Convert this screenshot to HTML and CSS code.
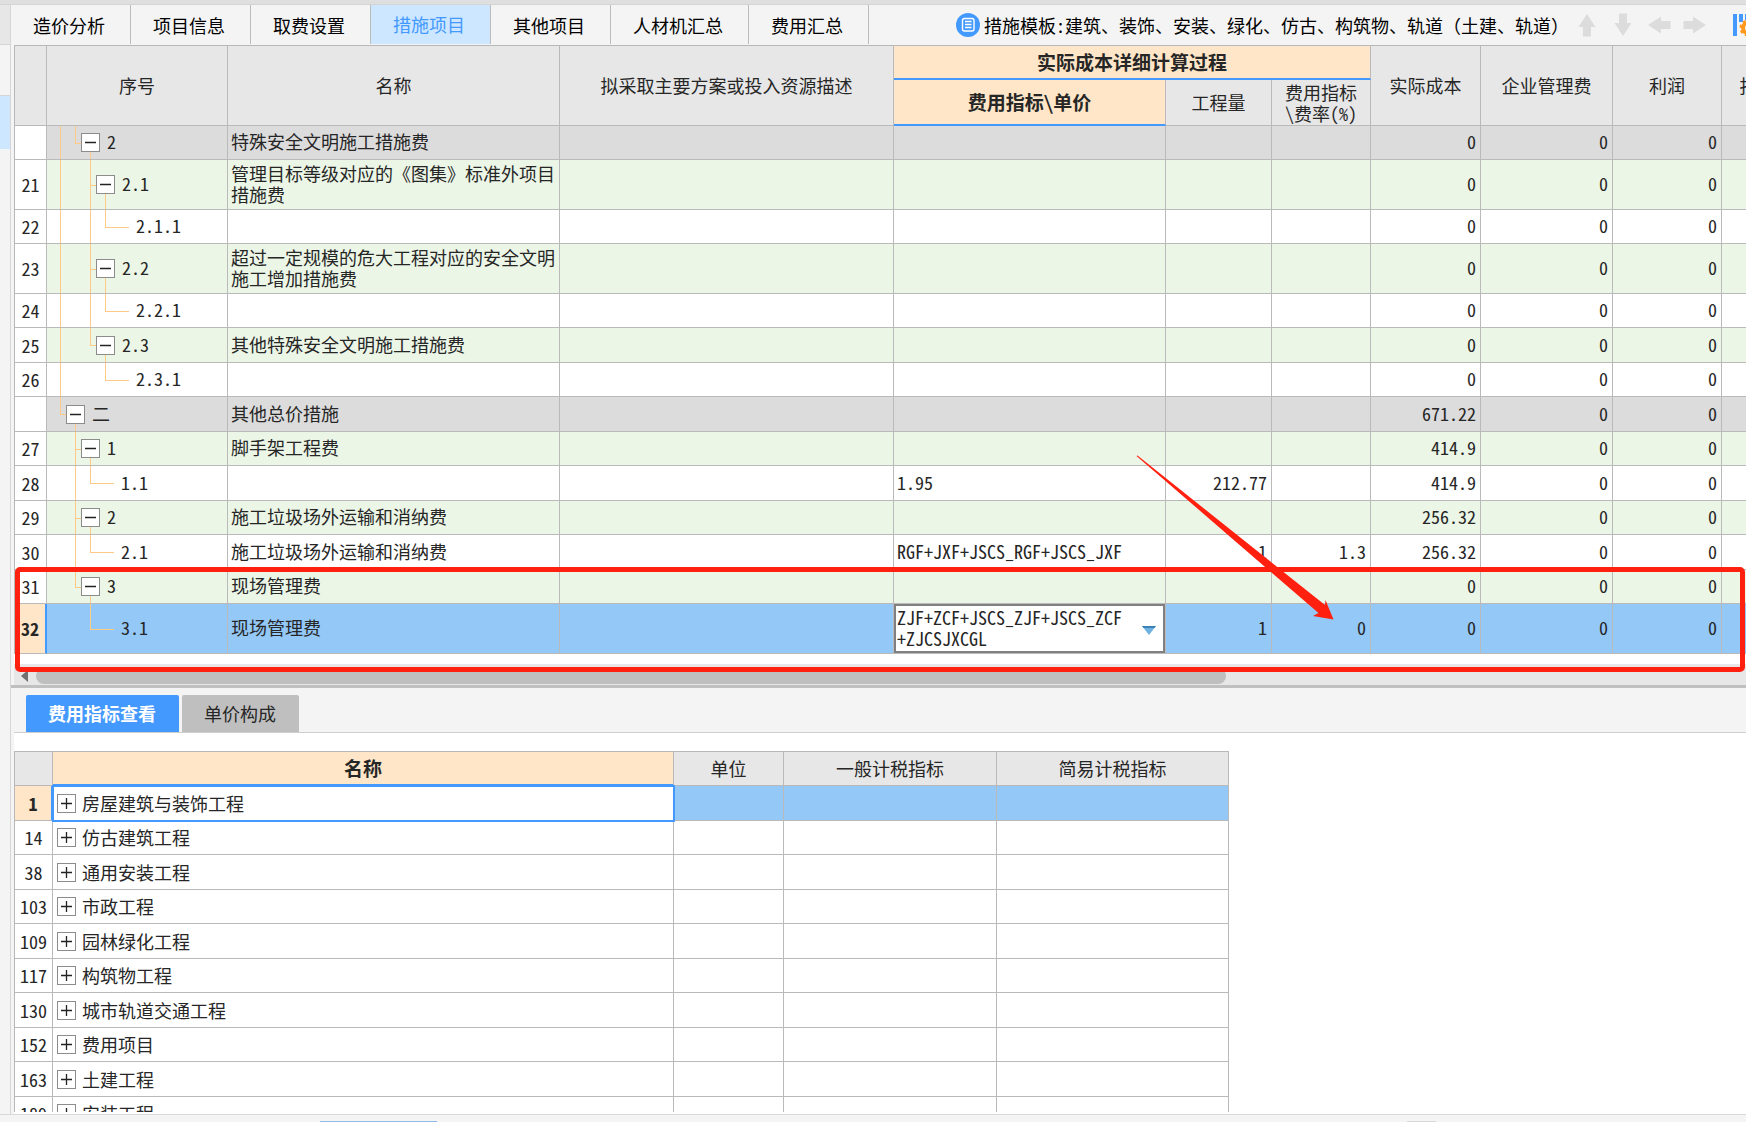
FILE: index.html
```html
<!DOCTYPE html>
<html lang="zh-CN">
<head>
<meta charset="utf-8">
<title>措施项目</title>
<link rel="stylesheet" href="styles.css">
</head>
<body>
<svg class="defs" aria-hidden="true">
  <symbol id="minus" viewBox="0 0 17 17"><path d="M3 8.5h11" stroke="#222" stroke-width="1.5"/></symbol>
  <symbol id="plus" viewBox="0 0 17 17"><path d="M3 8.5h11M8.5 3v11" stroke="#222" stroke-width="1.3"/></symbol>
  <symbol id="arrow" viewBox="0 0 24 24"><path d="M12 1l8.500 13h-4.500v9.500h-8V14H3.500z" fill="#dcdcdc"/></symbol>
</svg>
<div class="app">
  <aside class="rail">
    <div class="rail-head"></div>
    <div class="rail-item"></div>
    <div class="rail-item rail-item-active"></div>
  </aside>
  <main class="main">
    <header class="toolbar">
      <nav class="tabs">
        <button class="tab">造价分析</button>
        <button class="tab">项目信息</button>
        <button class="tab">取费设置</button>
        <button class="tab tab-active">措施项目</button>
        <button class="tab">其他项目</button>
        <button class="tab">人材机汇总</button>
        <button class="tab">费用汇总</button>
      </nav>
      <button class="template">
        <svg width="24" height="24" viewBox="0 0 24 24"><circle cx="12" cy="12" r="12" fill="#4499ff"/><rect x="6.500" y="5.500" width="11.500" height="12.500" rx="2" fill="none" stroke="#fff" stroke-width="1.4"/><path d="M9 8.500h6.500M9 11.500h6.500M9 14.500h6.500" stroke="#fff" stroke-width="1.300"/></svg>
        <span>措施模板:建筑、装饰、安装、绿化、仿古、构筑物、轨道<span class="wide">（土建、轨道）</span></span>
      </button>
      <div class="moves">
        <button class="move" aria-label="上移"><svg width="24" height="24"><use href="#arrow"/></svg></button>
        <button class="move move-down" aria-label="下移"><svg width="24" height="24"><use href="#arrow"/></svg></button>
        <button class="move move-left" aria-label="升级"><svg width="24" height="24"><use href="#arrow"/></svg></button>
        <button class="move move-right" aria-label="降级"><svg width="24" height="24"><use href="#arrow"/></svg></button>
      </div>
      <button class="settings" aria-label="设置"><svg width="24" height="24" viewBox="0 0 24 24"><path d="M0 1h4v22H0zM6 1h4v8H6zM12 1h4v6h-4z" fill="#4499ff"/><circle cx="15" cy="15" r="5" fill="none" stroke="#ff9a1f" stroke-width="4"/><circle cx="15" cy="15" r="7" fill="none" stroke="#ff9a1f" stroke-width="3" stroke-dasharray="3 2.500"/></svg></button>
    </header>

    <section class="upper">
      <table class="grid cost">
        <colgroup><col class="c-num"><col class="c-seq"><col class="c-name"><col class="c-desc"><col class="c-price"><col class="c-qty"><col class="c-rate"><col class="c-cost"><col class="c-mgmt"><col class="c-profit"><col class="c-last"></colgroup>
        <thead>
          <tr class="head-top"><th rowspan="2"></th><th rowspan="2">序号</th><th rowspan="2">名称</th><th rowspan="2">拟采取主要方案或投入资源描述</th><th colspan="3" class="current">实际成本详细计算过程</th><th rowspan="2">实际成本</th><th rowspan="2">企业管理费</th><th rowspan="2">利润</th><th rowspan="2">报价</th></tr>
          <tr class="head-sub"><th class="current">费用指标\单价</th><th>工程量</th><th>费用指标<br>\费率(%)</th></tr>
        </thead>
        <tbody>
          <tr class="group"><td class="num"></td><td class="seq"><div class="tree"><i class="g pass"></i><i class="g elbow end"></i><span class="node"><button class="box" aria-label="折叠"><svg><use href="#minus"/></svg></button></span><span class="label">2</span></div></td><td>特殊安全文明施工措施费</td><td></td><td></td><td></td><td></td><td class="val">0</td><td class="val">0</td><td class="val">0</td><td></td></tr>
          <tr class="item tall"><td class="num">21</td><td class="seq"><div class="tree"><i class="g pass"></i><i class="g"></i><i class="g tee end"></i><span class="node"><button class="box" aria-label="折叠"><svg><use href="#minus"/></svg></button></span><span class="label">2.1</span></div></td><td>管理目标等级对应的《图集》标准外项目措施费</td><td></td><td></td><td></td><td></td><td class="val">0</td><td class="val">0</td><td class="val">0</td><td></td></tr>
          <tr><td class="num">22</td><td class="seq"><div class="tree"><i class="g pass"></i><i class="g"></i><i class="g pass"></i><i class="g elbow leaf"></i><span class="label">2.1.1</span></div></td><td></td><td></td><td></td><td></td><td></td><td class="val">0</td><td class="val">0</td><td class="val">0</td><td></td></tr>
          <tr class="item tall"><td class="num">23</td><td class="seq"><div class="tree"><i class="g pass"></i><i class="g"></i><i class="g tee end"></i><span class="node"><button class="box" aria-label="折叠"><svg><use href="#minus"/></svg></button></span><span class="label">2.2</span></div></td><td>超过一定规模的危大工程对应的安全文明施工增加措施费</td><td></td><td></td><td></td><td></td><td class="val">0</td><td class="val">0</td><td class="val">0</td><td></td></tr>
          <tr><td class="num">24</td><td class="seq"><div class="tree"><i class="g pass"></i><i class="g"></i><i class="g pass"></i><i class="g elbow leaf"></i><span class="label">2.2.1</span></div></td><td></td><td></td><td></td><td></td><td></td><td class="val">0</td><td class="val">0</td><td class="val">0</td><td></td></tr>
          <tr class="item"><td class="num">25</td><td class="seq"><div class="tree"><i class="g pass"></i><i class="g"></i><i class="g elbow end"></i><span class="node"><button class="box" aria-label="折叠"><svg><use href="#minus"/></svg></button></span><span class="label">2.3</span></div></td><td>其他特殊安全文明施工措施费</td><td></td><td></td><td></td><td></td><td class="val">0</td><td class="val">0</td><td class="val">0</td><td></td></tr>
          <tr><td class="num">26</td><td class="seq"><div class="tree"><i class="g pass"></i><i class="g"></i><i class="g"></i><i class="g elbow leaf"></i><span class="label">2.3.1</span></div></td><td></td><td></td><td></td><td></td><td></td><td class="val">0</td><td class="val">0</td><td class="val">0</td><td></td></tr>
          <tr class="group"><td class="num"></td><td class="seq"><div class="tree"><i class="g elbow end"></i><span class="node"><button class="box" aria-label="折叠"><svg><use href="#minus"/></svg></button></span><span class="label">二</span></div></td><td>其他总价措施</td><td></td><td></td><td></td><td></td><td class="val">671.22</td><td class="val">0</td><td class="val">0</td><td></td></tr>
          <tr class="item"><td class="num">27</td><td class="seq"><div class="tree"><i class="g"></i><i class="g tee end"></i><span class="node"><button class="box" aria-label="折叠"><svg><use href="#minus"/></svg></button></span><span class="label">1</span></div></td><td>脚手架工程费</td><td></td><td></td><td></td><td></td><td class="val">414.9</td><td class="val">0</td><td class="val">0</td><td></td></tr>
          <tr><td class="num">28</td><td class="seq"><div class="tree"><i class="g"></i><i class="g pass"></i><i class="g elbow leaf"></i><span class="label">1.1</span></div></td><td></td><td></td><td>1.95</td><td class="val">212.77</td><td></td><td class="val">414.9</td><td class="val">0</td><td class="val">0</td><td></td></tr>
          <tr class="item"><td class="num">29</td><td class="seq"><div class="tree"><i class="g"></i><i class="g tee end"></i><span class="node"><button class="box" aria-label="折叠"><svg><use href="#minus"/></svg></button></span><span class="label">2</span></div></td><td>施工垃圾场外运输和消纳费</td><td></td><td></td><td></td><td></td><td class="val">256.32</td><td class="val">0</td><td class="val">0</td><td></td></tr>
          <tr><td class="num">30</td><td class="seq"><div class="tree"><i class="g"></i><i class="g pass"></i><i class="g elbow leaf"></i><span class="label">2.1</span></div></td><td>施工垃圾场外运输和消纳费</td><td></td><td>RGF+JXF+JSCS_RGF+JSCS_JXF</td><td class="val">1</td><td class="val">1.3</td><td class="val">256.32</td><td class="val">0</td><td class="val">0</td><td></td></tr>
          <tr class="item"><td class="num">31</td><td class="seq"><div class="tree"><i class="g"></i><i class="g elbow end"></i><span class="node"><button class="box" aria-label="折叠"><svg><use href="#minus"/></svg></button></span><span class="label">3</span></div></td><td>现场管理费</td><td></td><td></td><td></td><td></td><td class="val">0</td><td class="val">0</td><td class="val">0</td><td></td></tr>
          <tr class="selected tall"><td class="num num-current">32</td><td class="seq"><div class="tree"><i class="g"></i><i class="g"></i><i class="g elbow leaf"></i><span class="label">3.1</span></div></td><td>现场管理费</td><td></td><td class="edit"><div class="editor"><textarea class="formula" aria-label="费用指标\单价" rows="2" spellcheck="false">ZJF+ZCF+JSCS_ZJF+JSCS_ZCF
+ZJCSJXCGL</textarea><button class="drop" aria-label="选择"><svg width="14" height="9" viewBox="0 0 14 9"><path d="M0 0h14L7 9z" fill="#6fb2e0"/><path d="M0 0h14l-1.500 2h-11z" fill="#3d82b4"/></svg></button></div></td><td class="val">1</td><td class="val">0</td><td class="val">0</td><td class="val">0</td><td class="val">0</td><td></td></tr>
        </tbody>
      </table>
      <div class="scroll"><button class="scroll-left" aria-label="向左滚动"><svg width="7" height="12" viewBox="0 0 7 12"><path d="M7 0v12L0 6z" fill="#707070"/></svg></button><div class="thumb"></div></div>
      <div class="mark-box"></div>
      <svg class="mark-arrow" width="200" height="168" viewBox="1135 454 200 168"><path d="M1136.500 456L1137.500 455.500 1325 605 1325.500 600 1333.500 619.500 1313 616 1318.500 613z" fill="#ff2010"/></svg>
    </section>

    <nav class="subtabs">
      <button class="subtab subtab-active">费用指标查看</button>
      <button class="subtab">单价构成</button>
    </nav>

    <section class="lower">
      <table class="grid index">
        <colgroup><col class="i-num"><col class="i-name"><col class="i-unit"><col class="i-general"><col class="i-simple"></colgroup>
        <thead><tr><th></th><th class="current">名称</th><th>单位</th><th>一般计税指标</th><th>简易计税指标</th></tr></thead>
        <tbody>
          <tr class="selected"><td class="num num-current">1</td><td class="focus"><div class="entry"><button class="box" aria-label="展开"><svg><use href="#plus"/></svg></button>房屋建筑与装饰工程</div></td><td></td><td></td><td></td></tr>
          <tr><td class="num">14</td><td><div class="entry"><button class="box" aria-label="展开"><svg><use href="#plus"/></svg></button>仿古建筑工程</div></td><td></td><td></td><td></td></tr>
          <tr><td class="num">38</td><td><div class="entry"><button class="box" aria-label="展开"><svg><use href="#plus"/></svg></button>通用安装工程</div></td><td></td><td></td><td></td></tr>
          <tr><td class="num">103</td><td><div class="entry"><button class="box" aria-label="展开"><svg><use href="#plus"/></svg></button>市政工程</div></td><td></td><td></td><td></td></tr>
          <tr><td class="num">109</td><td><div class="entry"><button class="box" aria-label="展开"><svg><use href="#plus"/></svg></button>园林绿化工程</div></td><td></td><td></td><td></td></tr>
          <tr><td class="num">117</td><td><div class="entry"><button class="box" aria-label="展开"><svg><use href="#plus"/></svg></button>构筑物工程</div></td><td></td><td></td><td></td></tr>
          <tr><td class="num">130</td><td><div class="entry"><button class="box" aria-label="展开"><svg><use href="#plus"/></svg></button>城市轨道交通工程</div></td><td></td><td></td><td></td></tr>
          <tr><td class="num">152</td><td><div class="entry"><button class="box" aria-label="展开"><svg><use href="#plus"/></svg></button>费用项目</div></td><td></td><td></td><td></td></tr>
          <tr><td class="num">163</td><td><div class="entry"><button class="box" aria-label="展开"><svg><use href="#plus"/></svg></button>土建工程</div></td><td></td><td></td><td></td></tr>
          <tr><td class="num">189</td><td><div class="entry"><button class="box" aria-label="展开"><svg><use href="#plus"/></svg></button>安装工程</div></td><td></td><td></td><td></td></tr>
        </tbody>
      </table>
    </section>
  </main>
  <footer class="status"><span class="status-active"></span><span class="status-mark"></span></footer>
</div>
</body>
</html>
```
FILE: styles.css
```css
* { box-sizing: border-box; }

body {
  margin: 0;
  color: #262626;
  font-family: "Noto Sans CJK SC", "Liberation Sans", sans-serif;
  font-size: 18px;
  line-height: 21px;
  font-feature-settings: "hwid";
}

button, textarea {
  margin: 0;
  padding: 0;
  border: 0;
  background: none;
  color: inherit;
  font: inherit;
  font-feature-settings: inherit;
}

.defs { display: none; }
.wide { font-feature-settings: normal; }

.app {
  display: grid;
  grid-template: minmax(0, 1fr) 8px / 11px minmax(0, 1fr);
  height: 100vh;
  overflow: hidden;
  border-top: 4px solid #dfdfdf;
  background: #f4f4f4;
}

/* Left rail */
.rail { border-right: 1px solid #d6d6d6; }
.rail-head { height: 41px; border-top: 1px solid #d4d4d4; border-bottom: 1px solid #d4d4d4; background: #e7e7e7; }
.rail-item { height: 51px; border-bottom: 1px solid #d4d4d4; }
.rail-item-active { height: 53px; border: 0; background: #cce7ff; }

.main { display: flex; flex-direction: column; min-height: 0; }

/* Toolbar */
.toolbar {
  display: flex;
  align-items: center;
  flex: none;
  height: 41px;
  overflow: hidden;
  border-top: 1px solid #d4d4d4;
  color: #000;
}
.toolbar button { flex: none; }
.tabs { display: flex; align-self: stretch; flex: none; padding-bottom: 1px; }
.tab { padding: 2px 25px 0 22px; border-right: 1px solid #bcbcbc; white-space: nowrap; }
.tab-active { padding-top: 0; background: #cce7ff; color: #4499ff; }
.template { display: flex; align-items: center; gap: 4px; margin-left: 87px; white-space: nowrap; }
.moves { display: flex; flex: none; }
.move { display: grid; place-items: center; width: 36px; height: 36px; }
.move-down svg { transform: rotate(180deg); }
.move-left svg { transform: rotate(-90deg); }
.move-right svg { transform: rotate(90deg); }
.settings { display: flex; margin-left: 20px; }

/* Grids */
.grid {
  table-layout: fixed;
  border-collapse: separate;
  border-spacing: 0;
  border-top: 1px solid #b8b8b8;
  border-left: 1px solid #b8b8b8;
  background: #fff;
}
.grid th, .grid td { height: 34px; border-right: 1px solid #bababa; border-bottom: 1px solid #bababa; }
.grid th { padding: 0; background: #e7e7e7; font-weight: 400; }
.grid th.current { padding-bottom: 2px; border-bottom: 2px solid #4499ff; background: #ffe6c8; font-size: 19px; font-weight: 700; }
.grid td { padding: 0 4px 2px 3px; overflow: hidden; }
.grid .num { padding: 0; background: #fff; text-align: center; }
.grid .num-current { border-right: 2px solid #4499ff; background: #ffe6c8; font-weight: 700; }
.grid .val { text-align: right; }
.grid .group td { background: #dcdcdc; }
.grid .group .num { background: #fff; }
.grid .item td { background: #ecf6e7; }
.grid .item .num { background: #fff; }
.grid .selected td { background: #93c8f7; }
.grid .selected .num-current { background: #ffe6c8; }

.box {
  display: block;
  flex: none;
  width: 19px;
  height: 19px;
  border: 1px solid #8c8c8c;
  background: #fff;
}
.box svg { display: block; width: 17px; height: 17px; }

/* Cost grid */
.upper { position: relative; flex: none; padding-left: 3px; overflow: hidden; border-bottom: 3px solid #c0c0c0; }
.cost { width: 1780px; }
.c-num { width: 32px; }
.c-seq { width: 181px; }
.c-name { width: 332px; }
.c-desc { width: 334px; }
.c-price { width: 272px; }
.c-qty { width: 106px; }
.c-rate { width: 99px; }
.c-cost { width: 110px; }
.c-mgmt { width: 132px; }
.c-profit { width: 109px; }
.c-last { width: 72px; }
.cost .head-sub th { height: 46px; }
.cost tbody tr:nth-child(even) td { height: 35px; }
.cost tbody tr.tall td { height: 50px; }
.grid .seq { padding: 0 0 0 13px; }

/* Tree guides */
.tree { display: flex; height: 100%; }
.g { flex: none; width: 15px; }
.g.end { width: 6px; }
.g.leaf { width: 24px; }
.pass, .tee { border-left: 1px solid #ffca85; }
.tee::before, .elbow::before { content: ""; display: block; height: 50%; border-bottom: 1px solid #ffca85; }
.elbow::before { border-left: 1px solid #ffca85; }
.node { display: flex; flex-direction: column; align-items: center; flex: none; width: 19px; }
.node::before { content: ""; flex: 1; }
.node::after { content: ""; flex: 1; border-left: 1px solid #ffca85; }
.label { align-self: center; padding: 0 0 2px 7px; }

/* Formula editor */
.cost .edit { padding: 0; }
.editor { display: flex; align-items: center; height: 100%; padding: 0 7px 2px 0; border: 2px solid #808080; background: #fff; }
.formula { flex: 1; min-width: 0; height: 42px; padding-left: 1px; overflow: hidden; outline: 0; resize: none; white-space: pre; }
.drop { display: flex; padding-top: 5px; }

.scroll { display: flex; align-items: center; gap: 8px; height: 31px; padding: 2px 0 0 7px; border-top: 10px solid #fff; background: #e7e7e7; }
.scroll-left { display: flex; }
.thumb { width: 69%; height: 16px; border-radius: 8px; background: #bfbfbf; }

/* Review marks over the grid */
.mark-box { position: absolute; right: 1px; bottom: 13px; left: 4px; height: 105px; border: 5px solid #ff2010; border-radius: 5px; }
.mark-arrow { position: absolute; top: 409px; left: 1124px; }

/* Lower panel */
.subtabs { display: flex; align-items: flex-end; gap: 3px; flex: none; height: 45px; margin-left: 3px; padding-left: 12px; border-bottom: 1px solid #cfcfcf; }
.subtab { height: 37px; padding: 0 23px 0 22px; border-radius: 2px 2px 0 0; background: #bfbfbf; white-space: nowrap; }
.subtab-active { background: #4499ff; color: #fff; font-weight: 700; }
.lower { flex: 1; min-height: 0; margin-left: 3px; padding-top: 18px; overflow: hidden; border-bottom: 2px solid #fff; background: #fff; }
.index { width: 1215px; }
.i-num { width: 38px; }
.i-name { width: 621px; }
.i-unit { width: 110px; }
.i-general { width: 213px; }
.i-simple { width: 232px; }
.index td { padding-bottom: 0; }
.index tbody tr:nth-child(odd) td { height: 35px; }
.index .focus { position: relative; outline: 2px solid #4499ff; outline-offset: -1px; }
.index .selected .focus { background: #fff; }
.entry { display: flex; align-items: center; gap: 6px; padding-left: 1px; }

.status { display: flex; grid-column: 1 / -1; align-items: flex-end; border-top: 1px solid #d9d9d9; }
.status-active { width: 117px; height: 1px; margin-left: 320px; background: #93b8ea; }
.status-mark { width: 29px; height: 1px; margin-left: 970px; background: #d9d9d9; }
```
